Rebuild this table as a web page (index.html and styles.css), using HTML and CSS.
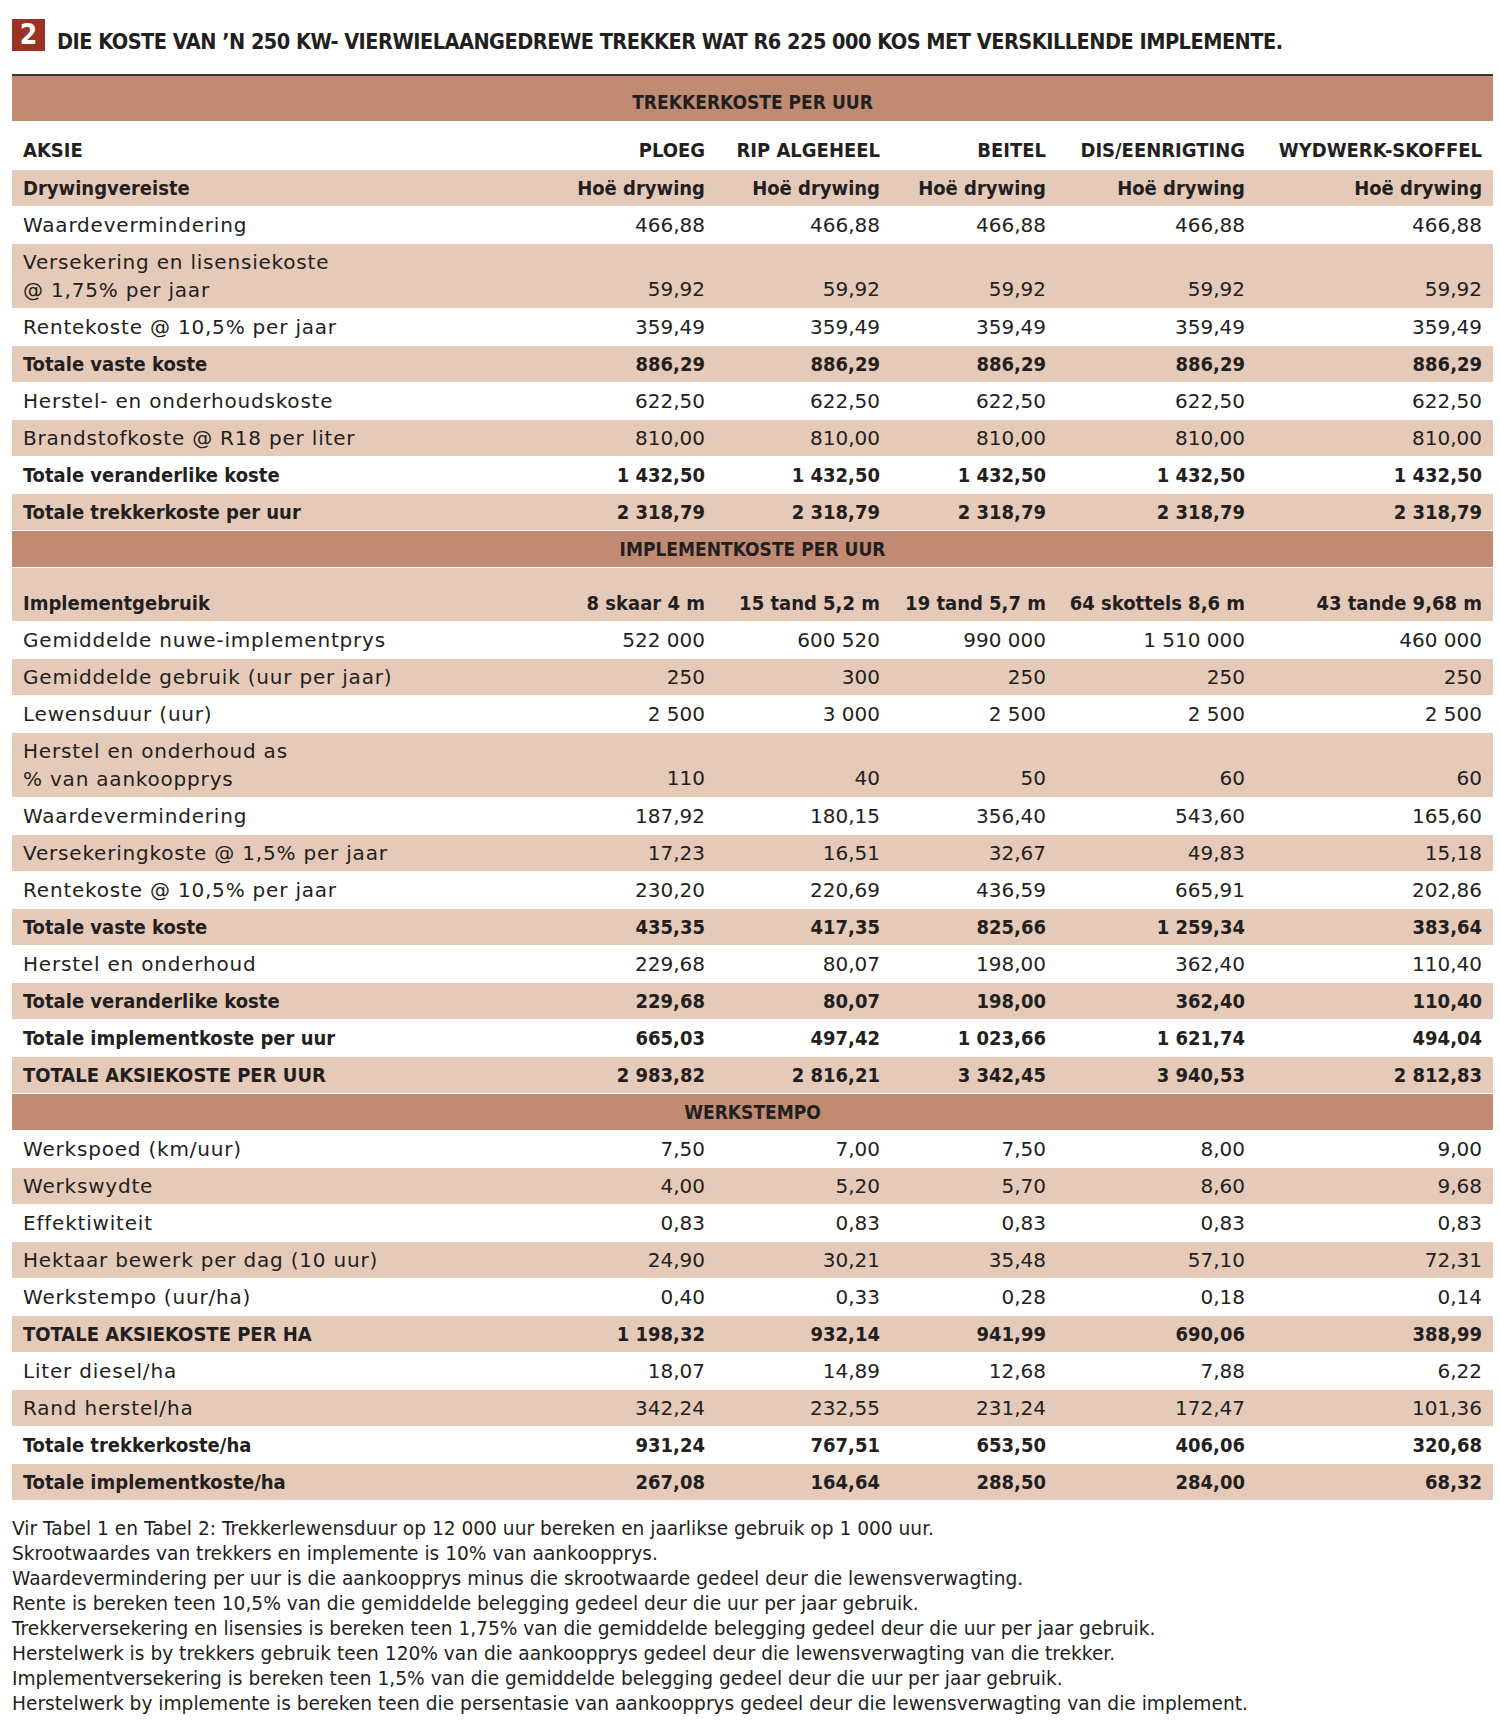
FILE: index.html
```html
<!DOCTYPE html>
<html lang="af">
<head>
<meta charset="utf-8">
<title>Tabel 2</title>
<link rel="stylesheet" href="styles.css">
</head>
<body>
<div class="page">
  <h1 class="title"><span class="badge">2</span><span class="title-text">DIE KOSTE VAN ’N 250 KW- VIERWIELAANGEDREWE TREKKER WAT R6 225 000 KOS MET VERSKILLENDE IMPLEMENTE.</span></h1>
  <table class="costs">
    <colgroup>
      <col class="c-label"><col class="c1"><col class="c2"><col class="c3"><col class="c4"><col class="c5">
    </colgroup>
    <tbody>
      <tr class="band first"><td colspan="6">TREKKERKOSTE PER UUR</td></tr>
      <tr class="head"><td>AKSIE</td><td>PLOEG</td><td>RIP ALGEHEEL</td><td>BEITEL</td><td>DIS/EENRIGTING</td><td>WYDWERK-SKOFFEL</td></tr>
      <tr class="alt bold"><td>Drywingvereiste</td><td>Hoë drywing</td><td>Hoë drywing</td><td>Hoë drywing</td><td>Hoë drywing</td><td>Hoë drywing</td></tr>
      <tr><td>Waardevermindering</td><td>466,88</td><td>466,88</td><td>466,88</td><td>466,88</td><td>466,88</td></tr>
      <tr class="alt double"><td>Versekering en lisensiekoste<br>@ 1,75% per jaar</td><td>59,92</td><td>59,92</td><td>59,92</td><td>59,92</td><td>59,92</td></tr>
      <tr><td>Rentekoste @ 10,5% per jaar</td><td>359,49</td><td>359,49</td><td>359,49</td><td>359,49</td><td>359,49</td></tr>
      <tr class="alt bold"><td>Totale vaste koste</td><td>886,29</td><td>886,29</td><td>886,29</td><td>886,29</td><td>886,29</td></tr>
      <tr><td>Herstel- en onderhoudskoste</td><td>622,50</td><td>622,50</td><td>622,50</td><td>622,50</td><td>622,50</td></tr>
      <tr class="alt"><td>Brandstofkoste @ R18 per liter</td><td>810,00</td><td>810,00</td><td>810,00</td><td>810,00</td><td>810,00</td></tr>
      <tr class="bold"><td>Totale veranderlike koste</td><td>1 432,50</td><td>1 432,50</td><td>1 432,50</td><td>1 432,50</td><td>1 432,50</td></tr>
      <tr class="alt bold"><td>Totale trekkerkoste per uur</td><td>2 318,79</td><td>2 318,79</td><td>2 318,79</td><td>2 318,79</td><td>2 318,79</td></tr>

      <tr class="band"><td colspan="6">IMPLEMENTKOSTE PER UUR</td></tr>
      <tr class="alt bold tall"><td>Implementgebruik</td><td>8 skaar 4 m</td><td>15 tand 5,2 m</td><td>19 tand 5,7 m</td><td>64 skottels 8,6 m</td><td>43 tande 9,68 m</td></tr>
      <tr><td>Gemiddelde nuwe-implementprys</td><td>522 000</td><td>600 520</td><td>990 000</td><td>1 510 000</td><td>460 000</td></tr>
      <tr class="alt"><td>Gemiddelde gebruik (uur per jaar)</td><td>250</td><td>300</td><td>250</td><td>250</td><td>250</td></tr>
      <tr><td>Lewensduur (uur)</td><td>2 500</td><td>3 000</td><td>2 500</td><td>2 500</td><td>2 500</td></tr>
      <tr class="alt double"><td>Herstel en onderhoud as<br>% van aankoopprys</td><td>110</td><td>40</td><td>50</td><td>60</td><td>60</td></tr>
      <tr><td>Waardevermindering</td><td>187,92</td><td>180,15</td><td>356,40</td><td>543,60</td><td>165,60</td></tr>
      <tr class="alt"><td>Versekeringkoste @ 1,5% per jaar</td><td>17,23</td><td>16,51</td><td>32,67</td><td>49,83</td><td>15,18</td></tr>
      <tr><td>Rentekoste @ 10,5% per jaar</td><td>230,20</td><td>220,69</td><td>436,59</td><td>665,91</td><td>202,86</td></tr>
      <tr class="alt bold"><td>Totale vaste koste</td><td>435,35</td><td>417,35</td><td>825,66</td><td>1 259,34</td><td>383,64</td></tr>
      <tr><td>Herstel en onderhoud</td><td>229,68</td><td>80,07</td><td>198,00</td><td>362,40</td><td>110,40</td></tr>
      <tr class="alt bold"><td>Totale veranderlike koste</td><td>229,68</td><td>80,07</td><td>198,00</td><td>362,40</td><td>110,40</td></tr>
      <tr class="bold"><td>Totale implementkoste per uur</td><td>665,03</td><td>497,42</td><td>1 023,66</td><td>1 621,74</td><td>494,04</td></tr>
      <tr class="alt bold"><td>TOTALE AKSIEKOSTE PER UUR</td><td>2 983,82</td><td>2 816,21</td><td>3 342,45</td><td>3 940,53</td><td>2 812,83</td></tr>

      <tr class="band"><td colspan="6">WERKSTEMPO</td></tr>
      <tr><td>Werkspoed (km/uur)</td><td>7,50</td><td>7,00</td><td>7,50</td><td>8,00</td><td>9,00</td></tr>
      <tr class="alt"><td>Werkswydte</td><td>4,00</td><td>5,20</td><td>5,70</td><td>8,60</td><td>9,68</td></tr>
      <tr><td>Effektiwiteit</td><td>0,83</td><td>0,83</td><td>0,83</td><td>0,83</td><td>0,83</td></tr>
      <tr class="alt"><td>Hektaar bewerk per dag (10 uur)</td><td>24,90</td><td>30,21</td><td>35,48</td><td>57,10</td><td>72,31</td></tr>
      <tr><td>Werkstempo (uur/ha)</td><td>0,40</td><td>0,33</td><td>0,28</td><td>0,18</td><td>0,14</td></tr>
      <tr class="alt bold"><td>TOTALE AKSIEKOSTE PER HA</td><td>1 198,32</td><td>932,14</td><td>941,99</td><td>690,06</td><td>388,99</td></tr>
      <tr><td>Liter diesel/ha</td><td>18,07</td><td>14,89</td><td>12,68</td><td>7,88</td><td>6,22</td></tr>
      <tr class="alt"><td>Rand herstel/ha</td><td>342,24</td><td>232,55</td><td>231,24</td><td>172,47</td><td>101,36</td></tr>
      <tr class="bold"><td>Totale trekkerkoste/ha</td><td>931,24</td><td>767,51</td><td>653,50</td><td>406,06</td><td>320,68</td></tr>
      <tr class="alt bold"><td>Totale implementkoste/ha</td><td>267,08</td><td>164,64</td><td>288,50</td><td>284,00</td><td>68,32</td></tr>
    </tbody>
  </table>
  <div class="notes">
    <p>Vir Tabel 1 en Tabel 2: Trekkerlewensduur op 12 000 uur bereken en jaarlikse gebruik op 1 000 uur.</p>
    <p>Skrootwaardes van trekkers en implemente is 10% van aankoopprys.</p>
    <p>Waardevermindering per uur is die aankoopprys minus die skrootwaarde gedeel deur die lewensverwagting.</p>
    <p>Rente is bereken teen 10,5% van die gemiddelde belegging gedeel deur die uur per jaar gebruik.</p>
    <p>Trekkerversekering en lisensies is bereken teen 1,75% van die gemiddelde belegging gedeel deur die uur per jaar gebruik.</p>
    <p>Herstelwerk is by trekkers gebruik teen 120% van die aankoopprys gedeel deur die lewensverwagting van die trekker.</p>
    <p>Implementversekering is bereken teen 1,5% van die gemiddelde belegging gedeel deur die uur per jaar gebruik.</p>
    <p>Herstelwerk by implemente is bereken teen die persentasie van aankoopprys gedeel deur die lewensverwagting van die implement.</p>
  </div>
</div>
</body>
</html>
```
FILE: styles.css
```css
html, body {
  margin: 0;
  padding: 0;
  background: #ffffff;
}
.page {
  width: 1481px;
  padding: 19px 7px 0 12px;
  color: #231f20;
  font-family: "DejaVu Sans", "Liberation Sans", sans-serif;
}
.title {
  display: flex;
  align-items: flex-end;
  gap: 12px;
  margin: 0;
  height: 32px;
  font-family: "DejaVu Sans Condensed", sans-serif;
  font-weight: bold;
  font-size: 21.5px;
  letter-spacing: -0.5px;
  white-space: nowrap;
}
.title-text {
  line-height: 25px;
  margin-bottom: -3px;
}
.badge {
  display: flex;
  align-items: center;
  justify-content: center;
  width: 33px;
  height: 32px;
  background: #9b3223;
  color: #ffffff;
  font-family: "DejaVu Sans Condensed", sans-serif;
  font-size: 28px;
  font-weight: bold;
  line-height: 32px;
  letter-spacing: 0;
}
.costs {
  margin-top: 23px;
  width: 1481px;
  border-collapse: collapse;
  table-layout: fixed;
  border-top: 2px solid #3a3435;
  font-size: 20px;
}
.c-label { width: 529px; }
.c1 { width: 175px; }
.c2 { width: 175px; }
.c3 { width: 166px; }
.c4 { width: 199px; }
.c5 { width: 237px; }
.costs td {
  height: 36px;
  padding: 0 11px;
  text-align: right;
  white-space: nowrap;
  vertical-align: middle;
  border-bottom: 1px solid #ffffff;
  line-height: 28px;
  font-weight: normal;
}
.costs td:first-child {
  text-align: left;
  letter-spacing: 0.8px;
}
.costs tr.alt td {
  background: #e5c9b9;
}
.costs tr.band td {
  background: #c18a72;
  text-align: center;
  height: 36px;
  font-family: "DejaVu Sans Condensed", sans-serif;
  font-weight: bold;
  font-size: 19px;
  letter-spacing: 0;
}
.costs tr.band.first td {
  height: 39px;
  padding-top: 6px;
}
.costs tr.head td {
  height: 39px;
  padding-top: 8px;
  font-family: "DejaVu Sans Condensed", sans-serif;
  font-weight: bold;
  font-size: 20px;
  letter-spacing: 0;
}
.costs tr.bold td {
  font-family: "DejaVu Sans Condensed", sans-serif;
  font-weight: bold;
  letter-spacing: 0;
}
.costs tr.double td {
  height: 59px;
  vertical-align: bottom;
  padding-bottom: 5px;
}
.costs tr.double td:first-child {
  vertical-align: middle;
  padding-bottom: 0;
  height: 64px;
}
.costs tr.tall td {
  height: 49px;
  vertical-align: bottom;
  padding-bottom: 4px;
}
.notes {
  margin-top: 15px;
  font-size: 18.6px;
  line-height: 25px;
}
.notes p {
  margin: 0;
}
```
